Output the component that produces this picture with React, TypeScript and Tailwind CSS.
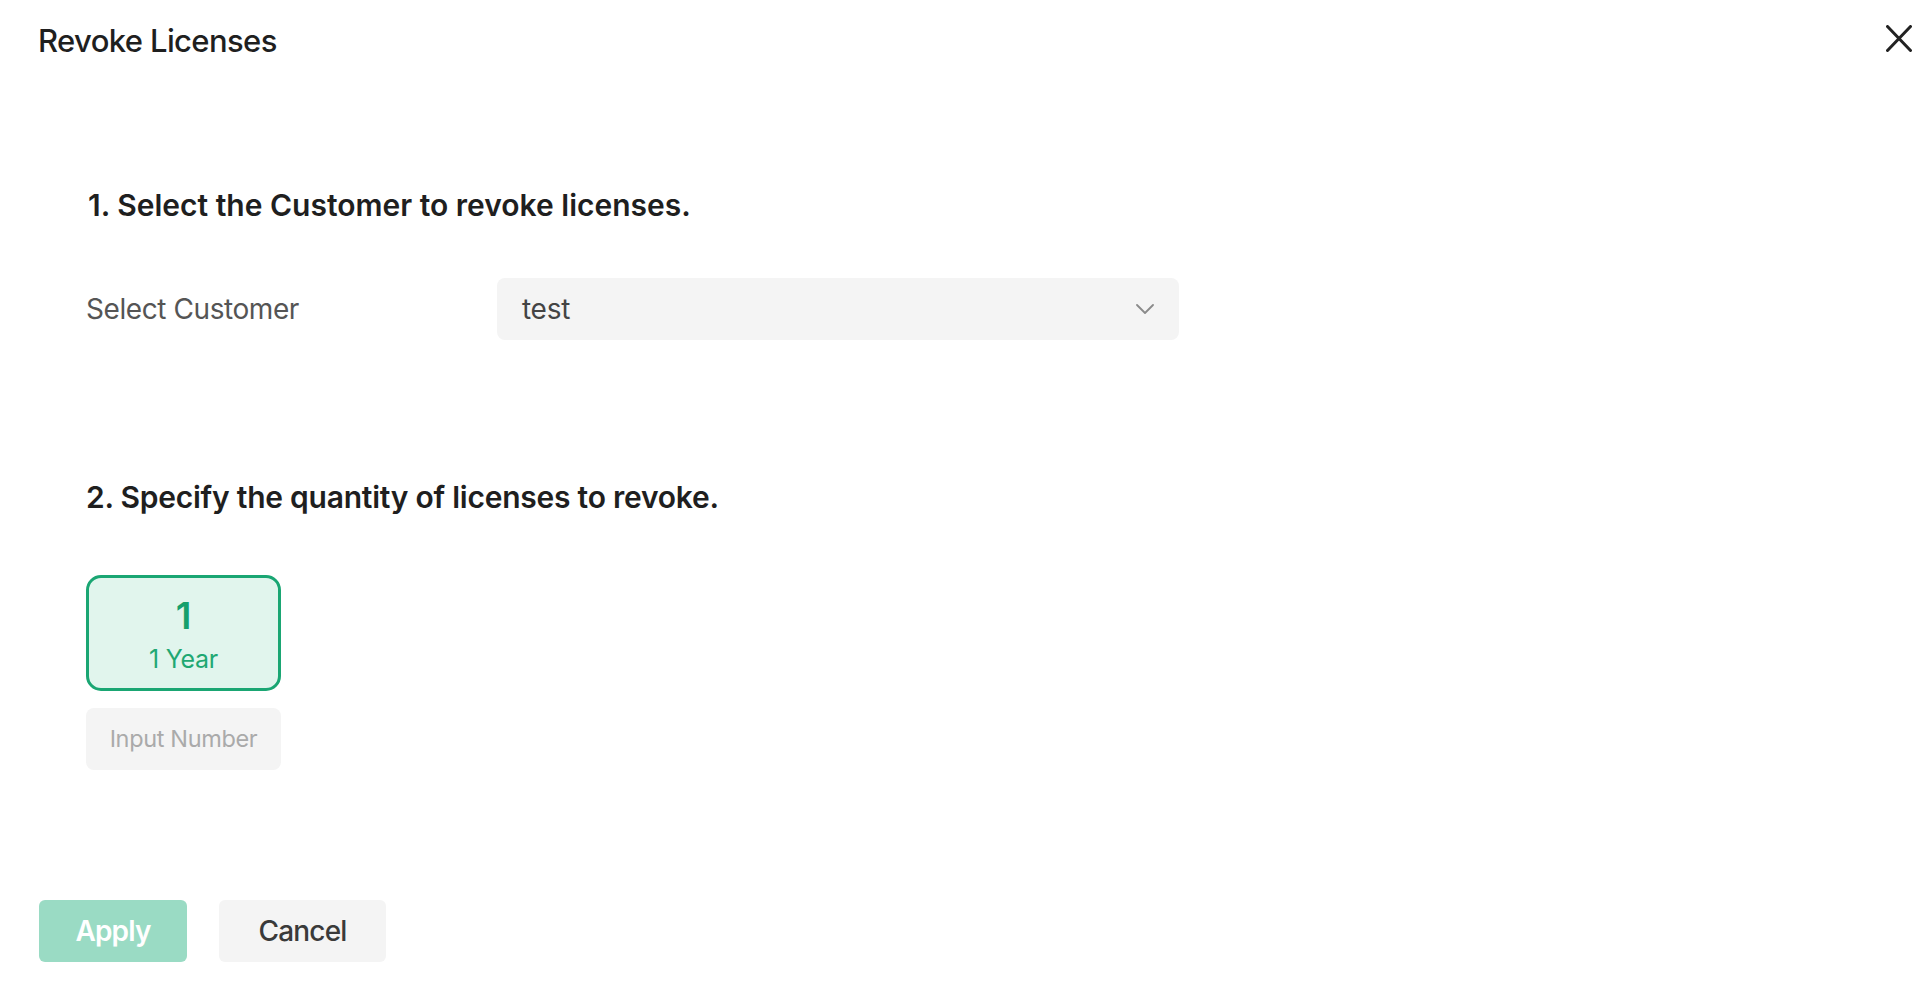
import React from "react";

export default function App() {
  return (
    <div className="w-[1929px] h-[986px] bg-white flex flex-col font-['Inter',sans-serif] text-[#222]">
      <header className="flex items-start justify-between pl-[38px] pr-[17px] pt-[21px]">
        <h1 className="text-[31px] leading-[40px] font-medium tracking-[-0.02em] text-[#1f1f1f]">Revoke Licenses</h1>
        <button className="mt-[4px] w-[26px] h-[27px] flex items-center justify-center" aria-label="Close">
          <svg width="26" height="27" viewBox="0 0 26 27" fill="none" stroke="#222" strokeWidth="3" strokeLinecap="round">
            <line x1="1.5" y1="1.5" x2="24.5" y2="25.5" />
            <line x1="24.5" y1="1.5" x2="1.5" y2="25.5" />
          </svg>
        </button>
      </header>

      <section className="pl-[86px] mt-[124px]">
        <h2 className="ml-[2px] text-[30px] leading-[40px] font-semibold tracking-[0em] text-[#1f1f1f]">
          1. Select the Customer to revoke licenses.
        </h2>
        <div className="mt-[53px] flex items-center">
          <div className="w-[411px] text-[28px] leading-[40px] tracking-[-0.015em] text-[#555]">Select Customer</div>
          <div className="w-[682px] h-[62px] bg-[#f4f4f4] rounded-[8px] flex items-center justify-between pl-[25px] pr-[25px]">
            <span className="text-[28px] leading-[40px] tracking-[-0.01em] text-[#444]">test</span>
            <svg width="18" height="10" viewBox="0 0 18 10" fill="none" stroke="#8a8a8a" strokeWidth="1.8" strokeLinecap="round" strokeLinejoin="round">
              <polyline points="1,1 9,9 17,1" />
            </svg>
          </div>
        </div>

        <h2 className="mt-[137px] text-[30px] leading-[40px] font-semibold tracking-[-0.008em] text-[#1f1f1f]">
          2. Specify the quantity of licenses to revoke.
        </h2>

        <div className="mt-[58px] w-[195px] h-[116px] rounded-[15px] border-[3px] border-[#1aa673] bg-[#e1f5ed] flex flex-col items-center pt-[16px]">
          <span className="text-[37px] leading-[44px] font-semibold text-[#15a06c]">1</span>
          <span className="text-[25px] leading-[43px] tracking-[-0.01em] text-[#1fa873]">1 Year</span>
        </div>
        <div className="mt-[17px] w-[195px] h-[62px] rounded-[8px] bg-[#f4f4f4] flex items-center justify-center">
          <span className="text-[23.5px] leading-[32px] tracking-[-0.015em] text-[#aaaaaa]">Input Number</span>
        </div>
      </section>

      <footer className="pl-[39px] mt-[130px] flex gap-[32px]">
        <button className="w-[148px] h-[62px] rounded-[6px] bg-[#9adbc4] text-white text-[28px] font-semibold tracking-[-0.03em]">Apply</button>
        <button className="w-[167px] h-[62px] rounded-[6px] bg-[#f4f4f4] text-[#3a3a3a] text-[28px] font-medium tracking-[-0.03em]">Cancel</button>
      </footer>
    </div>
  );
}
